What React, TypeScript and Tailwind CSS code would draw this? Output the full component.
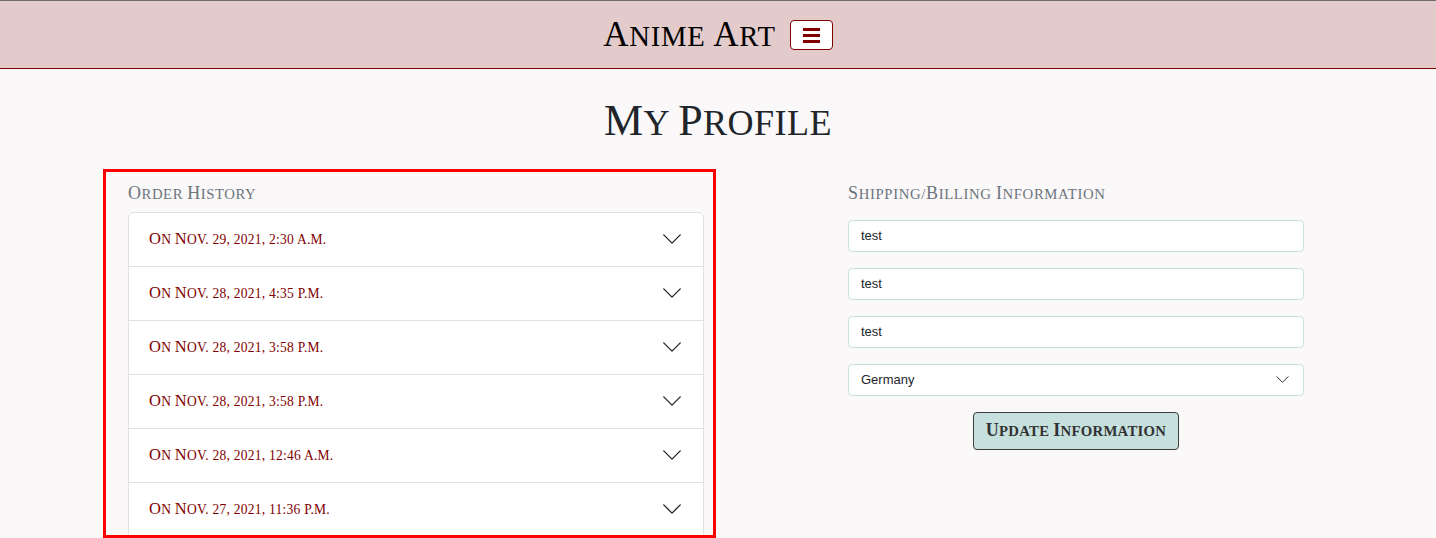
import React from 'react';

const orders = [
  'On Nov. 29, 2021, 2:30 a.m.',
  'On Nov. 28, 2021, 4:35 p.m.',
  'On Nov. 28, 2021, 3:58 p.m.',
  'On Nov. 28, 2021, 3:58 p.m.',
  'On Nov. 28, 2021, 12:46 a.m.',
  'On Nov. 27, 2021, 11:36 p.m.',
];

// fake Cinzel-style small caps: capitals full size, everything else smaller caps
const SC: React.FC<{ text: string }> = ({ text }) => {
  const parts = text.match(/[A-Z]+|[^A-Z]+/g) || [];
  return (
    <>
      {parts.map((p, i) =>
        /[A-Z]/.test(p[0]) ? (
          <span key={i}>{p}</span>
        ) : (
          <span key={i} className="text-[0.82em] uppercase">
            {p}
          </span>
        )
      )}
    </>
  );
};

const serif = "font-['Liberation_Serif','DejaVu_Serif',serif]";

const Chevron = ({ className = '' }: { className?: string }) => (
  <svg viewBox="0 0 16 16" className={className} fill="none" stroke="#212529" strokeWidth="1" strokeLinecap="round" strokeLinejoin="round">
    <path d="M2 5L8 11L14 5" />
  </svg>
);

export default function App() {
  return (
    <div className="min-h-screen bg-[#faf8f9]">
      <header className="h-[69px] border-t border-b border-t-[#6b6b6b] border-b-[#800000] bg-[#e3cbcb] flex items-center justify-center gap-[14px]">
        <span className={`${serif} text-[35px] leading-none text-black tracking-[0.02em]`}>
          <SC text="Anime Art" />
        </span>
        <button className="w-[43px] h-[30px] mt-[1px] bg-white border border-[#800000] rounded-[4px] flex flex-col items-center justify-center gap-[3px]">
          <span className="block w-[17px] h-[3px] bg-[#800000]" />
          <span className="block w-[17px] h-[3px] bg-[#800000]" />
          <span className="block w-[17px] h-[3px] bg-[#800000]" />
        </button>
      </header>

      <h1 className={`${serif} mt-[26px] text-center text-[44px] leading-[1.2] text-[#212529] tracking-[0.01em]`}>
        <SC text="My Profile" />
      </h1>

      <div className="mt-[21px] flex items-start">
        <div className="ml-[103px] w-[613px] h-[369px] border-[3px] border-[#ff0000] pl-[22px] pr-[9px] pt-[10px] overflow-hidden">
          <div className={`${serif} h-[22px] text-[18px] leading-[22px] text-[#6c757d] tracking-[0.03em]`}>
            <SC text="Order History" />
          </div>
          <div className="mt-[8px] bg-white border border-[#dee2e6] rounded-t-[6px]">
            {orders.map((o, i) => (
              <div
                key={i}
                className={`flex items-center justify-between pl-[20px] pr-[20px] ${i > 0 ? 'h-[54px] border-t border-[#dee2e6]' : 'h-[53px]'}`}
              >
                <span className={`${serif} text-[16.5px] text-[#800000] tracking-[0.015em]`}>
                  <SC text={o} />
                </span>
                <Chevron className="w-[22px] h-[22px]" />
              </div>
            ))}
          </div>
        </div>

        <div className="ml-[132px] w-[456px] pt-[13px]">
          <div className={`${serif} h-[22px] text-[18px] leading-[22px] text-[#6c757d] tracking-[0.035em]`}>
            <SC text="Shipping/Billing Information" />
          </div>
          <div className="mt-[16px] flex flex-col gap-[16px] font-['Liberation_Sans',Arial,sans-serif] text-[13px] text-[#212529]">
            {['test', 'test', 'test'].map((v, i) => (
              <div key={i} className="h-[32px] bg-white border border-[#c9e0de] rounded-[4px] flex items-center px-[12px]">
                {v}
              </div>
            ))}
            <div className="h-[32px] bg-white border border-[#c9e0de] rounded-[4px] flex items-center justify-between pl-[12px] pr-[13px]">
              <span>Germany</span>
              <Chevron className="w-[15px] h-[15px]" />
            </div>
            <div className="flex justify-center">
              <button className={`${serif} h-[38px] px-[12px] bg-[#c5e0dd] border border-[#3d3d3d] rounded-[4px] text-[18px] font-bold text-[#333] tracking-[0.015em]`}>
                <SC text="Update Information" />
              </button>
            </div>
          </div>
        </div>
      </div>
    </div>
  );
}
